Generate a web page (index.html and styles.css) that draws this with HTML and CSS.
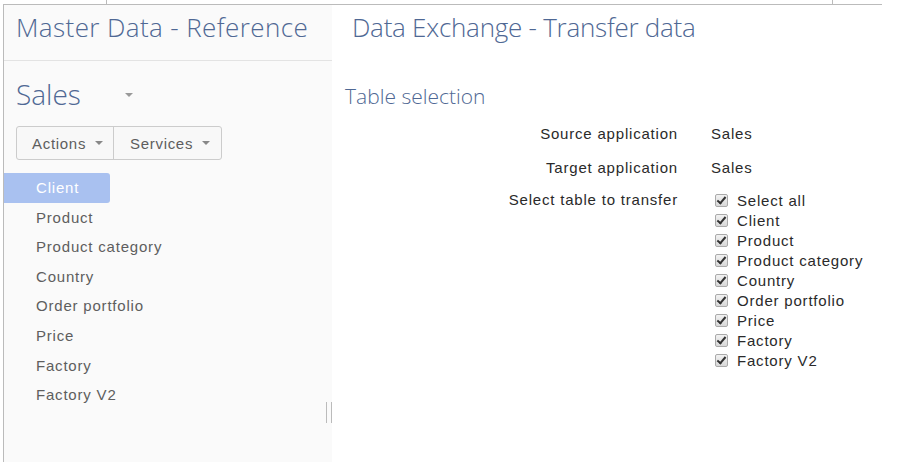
FILE: index.html
```html
<!DOCTYPE html>
<html lang="en">
<head>
    <meta charset="UTF-8">
    <title>Data Exchange - Transfer data</title>
    <link rel="stylesheet" href="styles.css">
</head>
<body>

    <!-- bottom edge of the tab strip above -->
    <div class="tab-stub">
        <div class="stub-cell first"></div>
        <div class="stub-cell second"></div>
    </div>

    <div class="frame">
        <!-- Left navigation -->
        <div class="sidebar">
            <div class="side-header">
                <h1 class="title side-title">Master Data - Reference</h1>
            </div>

            <div class="app-select">
                <span class="app-name">Sales</span>
                <span class="caret big"></span>
            </div>

            <div class="btn-group">
                <div class="btn">Actions <span class="caret"></span></div>
                <div class="btn">Services <span class="caret"></span></div>
            </div>

            <ul class="nav-list">
                <li class="active">Client</li>
                <li>Product</li>
                <li>Product category</li>
                <li>Country</li>
                <li>Order portfolio</li>
                <li>Price</li>
                <li>Factory</li>
                <li>Factory V2</li>
            </ul>

            <div class="resizer"></div>
        </div>

        <!-- Main content -->
        <div class="main">
            <h1 class="title main-title">Data Exchange - Transfer data</h1>
            <h2 class="section-title">Table selection</h2>

            <div class="form-grid">
                <div class="label">Source application</div>
                <div class="value">Sales</div>

                <div class="label">Target application</div>
                <div class="value">Sales</div>

                <div class="label">Select table to transfer</div>
                <div class="check-list">
                    <div class="check"><span class="box"></span>Select all</div>
                    <div class="check"><span class="box"></span>Client</div>
                    <div class="check"><span class="box"></span>Product</div>
                    <div class="check"><span class="box"></span>Product category</div>
                    <div class="check"><span class="box"></span>Country</div>
                    <div class="check"><span class="box"></span>Order portfolio</div>
                    <div class="check"><span class="box"></span>Price</div>
                    <div class="check"><span class="box"></span>Factory</div>
                    <div class="check"><span class="box"></span>Factory V2</div>
                </div>
            </div>
        </div>
    </div>

</body>
</html>
```
FILE: styles.css
```css
* {
    box-sizing: border-box;
}

body {
    margin: 0;
    background: #fff;
    font-family: 'Liberation Sans', Arial, sans-serif;
    font-size: 15px;
    letter-spacing: 0.8px;
    color: #2a2a2a;
    height: 462px;
    overflow: hidden;
}

.tab-stub {
    display: flex;
    height: 4px;
    margin-left: 3px;
    width: 879px;
}

.stub-cell {
    border-right: 1px solid #bbb;
}

.stub-cell.first {
    width: 104px;
}

.stub-cell.second {
    width: 726px;
}

.frame {
    display: flex;
    margin-left: 3px;
    width: 879px;
    height: 458px;
    border-top: 1px solid #bbb;
    border-left: 1px solid #bbb;
}

/* Sidebar */
.sidebar {
    position: relative;
    width: 328px;
    background: #fafafa;
}

.title {
    margin: 0;
    font-family: 'Open Sans', sans-serif;
    font-weight: 300;
    font-size: 26px;
    color: #4f6894;
}

.side-title {
    letter-spacing: 0.4px;
}

.side-header {
    height: 56px;
    padding: 4px 0 0 12px;
    border-bottom: 1px solid #e3e3e3;
}

.app-select {
    display: flex;
    align-items: center;
    height: 65px;
    padding: 0 0 0 12px;
}

.app-name {
    font-family: 'Open Sans', sans-serif;
    font-weight: 300;
    font-size: 28px;
    letter-spacing: 0;
    color: #4f6894;
    width: 109px;
}

.caret {
    display: inline-block;
    width: 0;
    height: 0;
    border-left: 4px solid transparent;
    border-right: 4px solid transparent;
    border-top: 4px solid #888;
    vertical-align: middle;
    margin-left: 9px;
}

.caret.big {
    margin-left: 0;
    margin-top: 2px;
    border-top-color: #999;
}

.btn-group {
    display: flex;
    margin-left: 12px;
    width: 206px;
    height: 34px;
    border: 1px solid #ccc;
    border-radius: 3px;
    background: #f8f8f8;
}

.btn {
    display: flex;
    align-items: center;
    padding-left: 15px;
    color: #5e5e5e;
    font-size: 15px;
    letter-spacing: 0.7px;
}

.btn:first-child {
    width: 97px;
    border-right: 1px solid #ccc;
}

.btn:last-child {
    padding-left: 16px;
}

.nav-list {
    list-style: none;
    margin: 13px 0 0;
    padding: 0;
}

.nav-list li {
    height: 29.6px;
    line-height: 29.6px;
    padding-left: 32px;
    color: #5e5e5e;
}

.nav-list li.active {
    width: 106px;
    background: #a9c1f0;
    color: #fff;
    border-radius: 0 3px 3px 0;
}

.resizer {
    position: absolute;
    left: 322px;
    top: 397px;
    width: 6px;
    height: 21px;
    border-left: 1px solid #bbb;
    border-right: 1px solid #bbb;
}

/* Main area */
.main {
    flex: 1;
    padding: 4px 0 0 13px;
}

.main-title {
    padding-left: 7px;
    letter-spacing: -0.25px;
}

.section-title {
    margin: 37px 0 0;
    font-family: 'Open Sans', sans-serif;
    font-weight: 300;
    font-size: 21px;
    letter-spacing: 0;
    color: #4f6894;
}

.form-grid {
    display: grid;
    grid-template-columns: 333px auto;
    grid-template-rows: 34px 32px auto;
    column-gap: 33px;
    margin-top: 14px;
}

.label {
    text-align: right;
    line-height: 20px;
}

.value {
    line-height: 20px;
}

.check-list {
    display: flex;
    flex-direction: column;
    margin-left: 4px;
}

.check {
    display: flex;
    align-items: center;
    height: 20px;
}

.box {
    position: relative;
    width: 13px;
    height: 13px;
    margin-right: 9px;
    border: 1px solid #aaa;
    border-radius: 2px;
    background: linear-gradient(#f2f2f2, #d8d8d8);
}

.box::after {
    content: "";
    position: absolute;
    left: 3px;
    top: 0px;
    width: 3px;
    height: 7px;
    border-right: 2px solid #333;
    border-bottom: 2px solid #333;
    transform: rotate(40deg);
}
```
